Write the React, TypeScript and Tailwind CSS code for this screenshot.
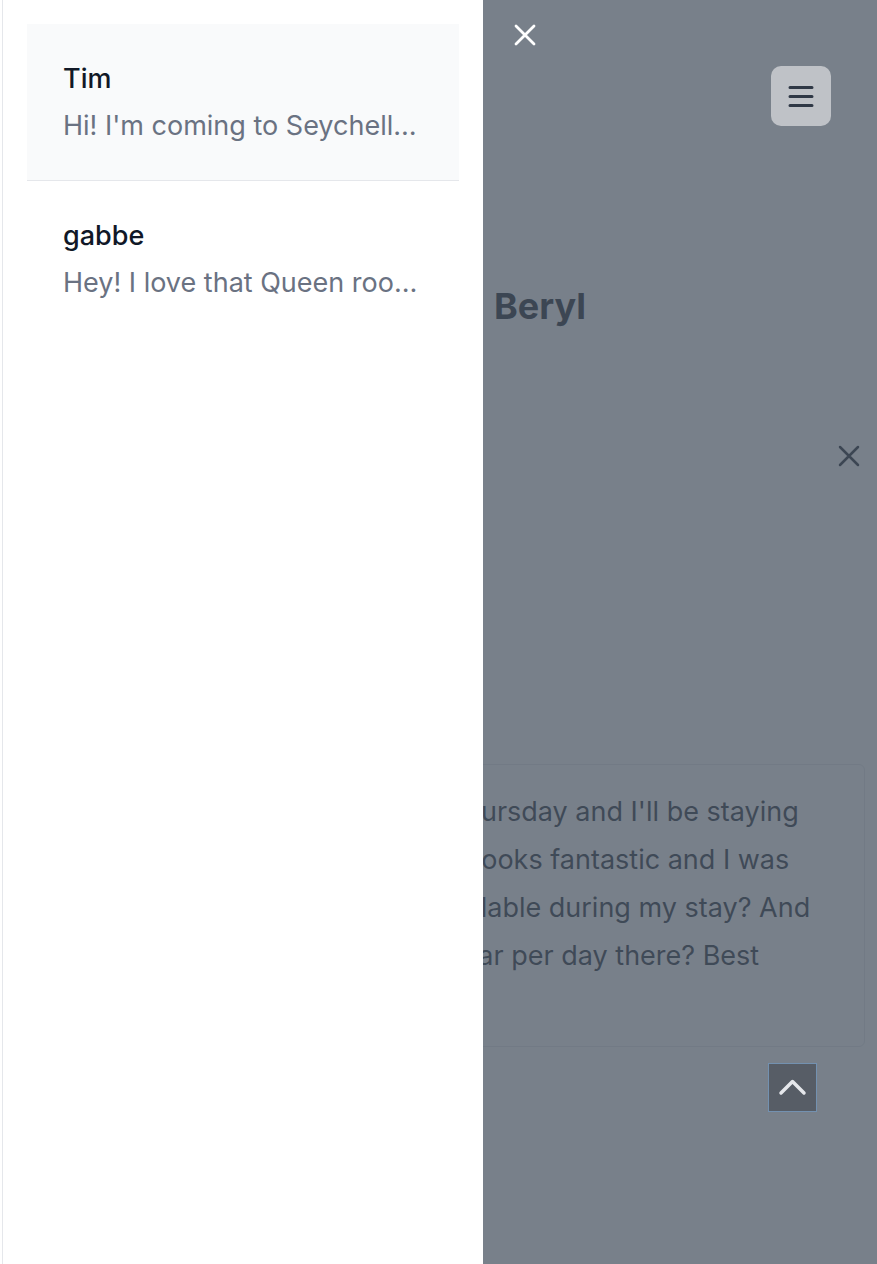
export default function App() {
  const lines = [
    "Hi! I'm coming to Seychelles on Thursday and I'll be staying",
    "for a week or so; the Queen room looks fantastic and I was",
    "wondering whether that one's available during my stay? And",
    "how much it would cost to rent a car per day there? Best",
    "regards, Tim",
  ];
  return (
    <div className="relative min-h-[1264px] w-full bg-white font-['Inter',sans-serif]">
      {/* underlying page */}
      <div className="flex flex-col">
        <header className="flex justify-end pt-[66px] pr-[46px]">
          <button className="relative z-[45] flex h-[60px] w-[60px] items-center justify-center rounded-[10px] bg-[#bfc2c7]">
            <svg width="60" height="60" viewBox="0 0 60 60" fill="none" stroke="#2f3846" strokeWidth="3" strokeLinecap="round">
              <path d="M19 21.5H41M19 30.5H41M19 39.5H41" />
            </svg>
          </button>
        </header>
        <h1 className="mt-[160px] pl-[494px] text-[36px] leading-[40px] font-bold text-[#111827]">Beryl</h1>
        <div className="mt-[119px] flex justify-end pr-[17px]">
          <svg width="22" height="22" viewBox="0 0 22 22" fill="none" stroke="#111827" strokeWidth="2.5" strokeLinecap="round">
            <path d="M2 2L20 20M20 2L2 20" />
          </svg>
        </div>
        <div className="mx-3 mt-[297px] rounded-md border border-gray-200 bg-white pt-[23px] pb-[18px] pl-[27px] text-[27px] leading-[48px] text-[#1f2937]">
          {lines.map((l, i) => (
            <div key={i} className="whitespace-nowrap">{l}</div>
          ))}
        </div>
      </div>

      {/* overlay */}
      <div className="fixed inset-0 z-40 bg-[#4b5563]/75" />

      {/* scroll to top */}
      <button className="fixed right-[60px] bottom-[152px] z-[45] flex h-[49px] w-[49px] items-center justify-center border border-[#7391b0] bg-[#575d66]">
        <svg width="47" height="47" viewBox="0 0 47 47" fill="none" stroke="#e5e7eb" strokeWidth="3.5" strokeLinecap="round" strokeLinejoin="round">
          <path d="M12 29L23.5 17.5L35 29" />
        </svg>
      </button>

      {/* drawer */}
      <div className="fixed inset-y-0 left-0 z-50 w-[483px] bg-white pl-[2px]">
        <div className="h-full border-l border-gray-200 px-6 pt-6">
          <div className="divide-y divide-gray-200">
            <div className="bg-gray-50 px-9 pt-[35px] pb-9">
              <div className="text-[27px] leading-[40px] font-medium text-[#111827]">Tim</div>
              <div className="mt-[9px] truncate text-[27px] leading-9 text-gray-500">Hi! I'm coming to Seychelles on Thursday and I'll be staying</div>
            </div>
            <div className="px-9 pt-[35px] pb-9">
              <div className="text-[27px] leading-[40px] font-medium text-[#111827]">gabbe</div>
              <div className="mt-[9px] truncate text-[27px] leading-9 text-gray-500">Hey! I love that Queen room, is it available next week?</div>
            </div>
          </div>
        </div>
        <button className="absolute top-6 left-[514px]">
          <svg width="22" height="22" viewBox="0 0 22 22" fill="none" stroke="#ffffff" strokeWidth="2.8" strokeLinecap="round">
            <path d="M2 2L20 20M20 2L2 20" />
          </svg>
        </button>
      </div>
    </div>
  );
}
